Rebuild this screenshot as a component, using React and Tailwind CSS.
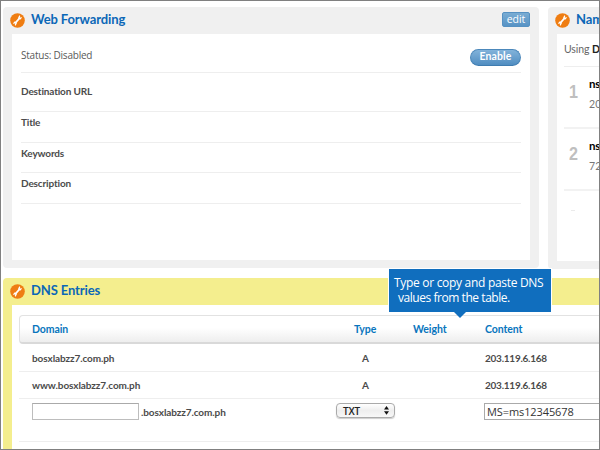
import React from 'react';

function Wrench() {
  return (
    <svg className="h-[15px] w-[15px] shrink-0" viewBox="0 0 15 15">
      <circle cx="7.5" cy="7.5" r="7.3" fill="#ef7d12" />
      <path d="M5.4 10 L9.6 5" stroke="#fff" strokeWidth="1.9" />
      <path d="M9.4 2.3 L8.2 4.6 L9 6.2 L10.6 6.6 L12 4.4 L10.9 3.9 L10.3 4.8 L9.7 4.4 L10.3 3Z M5.6 12.7 L6.8 10.4 L6 8.8 L4.4 8.4 L3 10.6 L4.1 11.1 L4.7 10.2 L5.3 10.6 L4.7 12Z" fill="#fff" />
    </svg>
  );
}

function Title({ children }) {
  return (
    <div className="flex h-[27px] items-center gap-[6px] pl-[7px]">
      <Wrench />
      <h2 className="pb-[3px] text-[13px] leading-none font-bold tracking-[-0.12px] whitespace-nowrap text-[#0b67b7]">{children}</h2>
    </div>
  );
}

const line = 'border-b border-[#eeeeee]';
const label = `${line} box-border text-[10px] leading-[20px] font-bold text-[#4b4b4b] tracking-[-0.15px]`;

function WebForwarding() {
  return (
    <section className="relative h-[261px] w-[536px] shrink-0 rounded-[4px] bg-[#f0f0f0] px-[9px]">
      <div className="-mx-[9px]"><Title>Web Forwarding</Title></div>
      <div className="absolute top-[5px] right-[9px] flex h-[15px] w-[28px] items-center justify-center rounded-[2px] border border-[#5591c2] bg-gradient-to-b from-[#79acd3] to-[#5793c5] pb-px font-['Open_Sans',sans-serif] text-[10.5px] leading-none text-white">edit</div>
      <div className="h-[226px] bg-white pr-[9px] pl-[9px]">
        <div className={`${line} flex h-[39px] items-center justify-between pt-[5px] text-[10.5px] text-[#5a5a5a]`}>
          <span className="pb-px font-['Open_Sans',sans-serif] text-[10px] tracking-[-0.22px]">Status: Disabled</span>
          <button className="mt-[3px] flex h-[17px] w-[51px] items-center justify-center rounded-full border border-[#4c88bb] border-b-[#3f7cb0] bg-gradient-to-b from-[#82b3da] to-[#508dc1] pb-px text-[10.5px] leading-none font-bold tracking-[0.1px] text-white">Enable</button>
        </div>
        <div className={`${label} h-[39px] pt-[8px]`}>Destination URL</div>
        <div className={`${label} h-[31px]`}>Title</div>
        <div className={`${label} h-[30px]`}>Keywords</div>
        <div className={`${label} h-[31px]`}>Description</div>
      </div>
    </section>
  );
}

function Server({ number, name, address }) {
  return (
    <div className="flex h-[62px] border-b-2 border-[#f2f2f2]">
      <div className="w-[25px] pt-[15px] pl-[5px] font-['Liberation_Sans',sans-serif] text-[19px] leading-[20px] font-bold text-[#bfbfbf]">
        <span className="inline-block origin-left scale-x-85">{number}</span>
      </div>
      <div className="pt-[7px] whitespace-nowrap">
        <div className="text-[11.5px] leading-[20px] font-bold tracking-[-0.2px] text-black">{name}</div>
        <div className="text-[10.5px] leading-[20px] tracking-[0.2px] text-[#777]">{address}</div>
      </div>
    </div>
  );
}

function NameServers() {
  return (
    <section className="h-[262px] w-[80px] shrink-0 rounded-[4px] bg-[#f0f0f0]">
      <Title>Name Servers</Title>
      <div className="ml-[9px] h-[227px] bg-white pl-[7px]">
        <div className="h-[33px] border-b border-[#eeeeee] pt-[5px] text-[10.5px] leading-[20px] tracking-[-0.1px] whitespace-nowrap text-[#666]">Using <b className="text-[#222]">Default</b></div>
        <Server number="1" name="ns1" address="203" />
        <Server number="2" name="ns2" address="72." />
        <div className="mt-[19px] ml-[7px] h-px w-[4px] bg-[#ebebeb]" />
      </div>
    </section>
  );
}

const columns = 'grid grid-cols-[304px_86px_63px_200px] pl-[12px]';

function Record({ domain }) {
  return (
    <div className={`${columns} h-[27px] border-b border-[#eeeeee] text-[10px] leading-[26px] font-bold tracking-[-0.1px] text-[#4b4b4b]`}>
      <span className="pl-px">{domain}</span>
      <span className="pl-[27px]">A</span>
      <span />
      <span className="pl-px tracking-[-0.25px]">203.119.6.168</span>
    </div>
  );
}

export default function App() {
  return (
    <main className="relative flex h-[450px] w-[600px] flex-col overflow-hidden bg-white pt-[7px] pl-[3px] font-['Lato','Open_Sans',sans-serif]">
      <div className="flex h-[271px] shrink-0 gap-[9px]">
        <WebForwarding />
        <NameServers />
      </div>
      <section className="h-[180px] w-[620px] shrink-0 rounded-t-[4px] bg-[#f4ee8e]">
        <Title>DNS Entries</Title>
        <div className="ml-[9px] h-[160px] bg-white pt-[10px] pl-[7px]">
          <div className={`${columns} h-[29px] items-center rounded-[4px] border border-b-2 border-[#e2e2e2] border-b-[#d9d9d9] bg-gradient-to-b from-white from-45% to-[#eeeeee] text-[10.5px] leading-none font-bold tracking-[-0.08px] text-[#0875bd]`}>
            <span>Domain</span>
            <span className="pl-[18px]">Type</span>
            <span className="-ml-[9px]">Weight</span>
            <span>Content</span>
          </div>
          <div className="pt-px"><Record domain="bosxlabzz7.com.ph" /></div>
          <Record domain="www.bosxlabzz7.com.ph" />
          <div className={`${columns} h-[43px] border-b border-[#eeeeee] pt-[4px] text-[10px] leading-[18px] font-bold tracking-[-0.1px] text-[#4b4b4b]`}>
            <div className="flex h-[18px] gap-[2px] pl-px">
              <div className="h-[17px] w-[107px] border border-[#bdbdbd] border-t-[#aaa] bg-white" />
              <span>.bosxlabzz7.com.ph</span>
            </div>
            <div className="ml-px flex h-[15px] w-[59px] items-center justify-between rounded-[4px] border border-[#aaa] bg-gradient-to-b from-white via-[#eeeeee] to-[#f7f7f7] pr-[5px] pl-[6px] text-[10px] leading-none text-[#222] shadow-[0_1px_1px_#ccc]">
              <span className="font-['Open_Sans',sans-serif] text-[10px] font-semibold tracking-[-0.2px]">TXT</span>
              <svg className="h-[9px] w-[5px]" viewBox="0 0 5 9"><path d="M2.5 0L5 3.6H0ZM0 5.2H5L2.5 8.8Z" fill="#111" /></svg>
            </div>
            <span />
            <div className="h-[17px] w-[190px] border border-[#aaa] pl-[2px] font-['Open_Sans',sans-serif] text-[11px] leading-[16px] font-normal tracking-[-0.1px] text-[#333]">MS=ms12345678</div>
          </div>
        </div>
      </section>
      <aside className="absolute top-[269px] left-[389px] h-[43px] w-[162px] bg-[#106ebe] pt-[6px] pl-[5px] font-['Open_Sans',sans-serif] text-[12px] leading-[15px] tracking-[-0.3px] whitespace-nowrap text-white outline outline-white">
        <p>Type or copy and paste DNS</p>
        <p className="pl-[4px] tracking-[-0.45px]">values from the table.</p>
        <svg className="absolute top-[43px] left-[65px] h-[6px] w-[12px]" viewBox="0 0 12 6"><path d="M0 0H12L6 6Z" fill="#106ebe" /></svg>
      </aside>
      <div className="pointer-events-none absolute inset-0 border border-[#808080]" />
    </main>
  );
}
